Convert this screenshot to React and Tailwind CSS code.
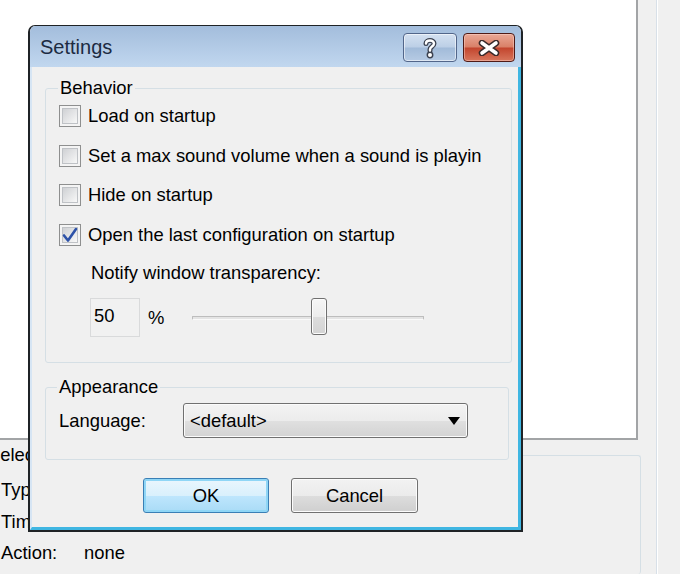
function Check({ label, checked }) {
  return (
    <div className="flex items-center h-[22px]">
      <div className="relative w-[22px] h-[22px] shrink-0 border border-[#8e8f8f] bg-[#f4f4f4] p-[2px]">
        <div className="w-full h-full border border-[#bfc2c6] bg-gradient-to-br from-[#cfd1d4] to-[#f8f8f8]" />
        {checked && (
          <svg className="absolute left-[-1px] top-[-1px]" width="22" height="22" viewBox="0 0 22 22">
            <path d="M5 11.5 L9 16.5 L17 5" fill="none" stroke="#2d52a8" strokeWidth="2.6" strokeLinejoin="round" strokeLinecap="round" />
          </svg>
        )}
      </div>
      <span className="ml-[7px] whitespace-nowrap">{label}</span>
    </div>
  );
}

function Dialog() {
  return (
    <div className="absolute left-[28px] top-[25px] w-[495px] h-[507px] flex flex-col border-2 border-t border-[#1f2326] rounded-t-[7px] overflow-hidden">
      <div className="h-[41px] shrink-0 flex items-start justify-between bg-gradient-to-b from-[#a3bddc] to-[#c1d7ef]">
        <div className="pl-[10px] h-full flex items-center text-[20px] leading-[24px] text-[#1c2b42]">Settings</div>
        <div className="flex gap-[6px] pt-[7px] pr-[6px]">
          <div className="w-[54px] h-[29px] rounded-[4px] border border-[#52668a] bg-[linear-gradient(#d4e1f1_0%,#bccfe6_48%,#a2bbd9_52%,#b6cbe4_100%)] shadow-[inset_0_0_0_1px_rgba(255,255,255,0.55)] flex items-center justify-center">
            <svg width="14" height="22" viewBox="0 0 14 22">
              <g fill="none" strokeLinecap="round" strokeLinejoin="round">
                <path d="M3 6.5 C3 2.5, 11 2.5, 11 6.5 C11 9.5, 7 9.5, 7 12.5 L7 13.5" stroke="#3c4250" strokeWidth="5" />
                <circle cx="7" cy="18" r="1.2" stroke="#3c4250" strokeWidth="4.5" />
                <path d="M3 6.5 C3 2.5, 11 2.5, 11 6.5 C11 9.5, 7 9.5, 7 12.5 L7 13.5" stroke="#ffffff" strokeWidth="2.4" />
                <circle cx="7" cy="18" r="0.9" stroke="#ffffff" strokeWidth="2.2" />
              </g>
            </svg>
          </div>
          <div className="w-[52px] h-[29px] rounded-[4px] border border-[#4f1a16] bg-[linear-gradient(#eaa896_0%,#d98068_48%,#c3452e_52%,#d7765c_100%)] shadow-[inset_0_0_0_1px_rgba(255,220,210,0.45)] flex items-center justify-center">
            <svg width="24" height="16" viewBox="0 0 24 16">
              <g strokeLinecap="round">
                <path d="M5 3 L19 13 M19 3 L5 13" stroke="#3a2a2a" strokeWidth="6.5" />
                <path d="M5 3 L19 13 M19 3 L5 13" stroke="#ffffff" strokeWidth="3.6" />
              </g>
            </svg>
          </div>
        </div>
      </div>
      <div className="flex-1 flex flex-col bg-[#f0f0f0] border-l-2 border-l-[#d6e5f4] border-r-[3px] border-r-[#3fb6e2] border-b-[3px] border-b-[#3fb6e2]">
        <fieldset className="ml-[13px] mt-[10px] w-[467px] border border-[#d5dfe5] rounded-[3px] p-0">
          <legend className="ml-[12px] px-[2px]">Behavior</legend>
          <div className="pl-[13px] pt-[6px] pb-[25px]">
            <div className="flex flex-col gap-[17.5px]">
              <Check label="Load on startup" />
              <Check label="Set a max sound volume when a sound is playin" />
              <Check label="Hide on startup" />
              <Check label="Open the last configuration on startup" checked />
            </div>
            <div className="mt-[16.5px] ml-[32px] h-[22px]">Notify window transparency:</div>
            <div className="mt-[14px] h-[39px] flex items-center">
              <div className="ml-[31px] w-[50px] h-[39px] border border-[#d9dadb] bg-[#f1f1f1] flex items-center pl-[3px] pb-[3px]">50</div>
              <span className="w-[52px] pl-[8px]">%</span>
              <div className="relative w-[232px] h-[39px] flex items-center">
                <div className="w-full h-[4px] bg-[#e4e4e4] border border-[#bdbdbd] border-b-[#fafafa] rounded-[1px]" />
                <div className="absolute left-[119px] top-0 w-[16px] h-[37px] rounded-[3px] border border-[#707070] bg-[linear-gradient(#f6f6f6,#ececec_50%,#dcdcdc_51%,#d4d4d4)] shadow-[inset_0_0_0_1px_#fcfcfc]" />
              </div>
            </div>
          </div>
        </fieldset>
        <fieldset className="ml-[13px] mt-[13px] w-[464px] border border-[#d5dfe5] rounded-[3px] p-0">
          <legend className="ml-[11px] px-[2px]">Appearance</legend>
          <div className="pl-[13px] pt-[5px] pb-[21px] flex items-center">
            <span className="w-[124px]">Language:</span>
            <div className="w-[285px] h-[35px] rounded-[3px] border border-[#707070] bg-[linear-gradient(#f3f3f3,#ececec_50%,#e0e0e0_51%,#d3d3d3)] shadow-[inset_0_0_0_1px_#fbfbfb] flex items-center justify-between pl-[6px] pr-[7px]">
              <span>&lt;default&gt;</span>
              <svg width="12" height="8" viewBox="0 0 12 8">
                <path d="M0 0 H12 L6 8 Z" fill="#000" />
              </svg>
            </div>
          </div>
        </fieldset>
        <div className="mt-[18px] pl-[111px] flex gap-[22px]">
          <div className="w-[126px] h-[35px] rounded-[3px] border border-[#3a7fb5] bg-[linear-gradient(#eaf6fd,#d9f0fc_50%,#bee6fd_51%,#a9dbf6)] shadow-[inset_0_0_0_2px_#8fd6f6] flex items-center justify-center">OK</div>
          <div className="w-[127px] h-[35px] rounded-[3px] border border-[#707070] bg-[linear-gradient(#f2f2f2,#ebebeb_50%,#dddddd_51%,#cfcfcf)] shadow-[inset_0_0_0_1px_#fcfcfc] flex items-center justify-center">Cancel</div>
        </div>
      </div>
    </div>
  );
}

export default function App() {
  return (
    <div className="relative w-[680px] h-[574px] overflow-hidden bg-[#f0f0f0] font-['Liberation_Sans',Arial,sans-serif] text-[18.4px] leading-[22px] text-black">
      <div className="flex h-full">
        <div className="w-[641px] shrink-0 flex flex-col">
          <div className="w-[638px] h-[440px] shrink-0 bg-white border-r-2 border-b-2 border-[#a2a4a6]" />
          <fieldset className="ml-[-30px] w-[671px] mt-[4px] flex-1 border border-b-0 border-[#d5dfe5] rounded-[3px] p-0">
            <legend className="ml-[16px] px-[1px]">Selection</legend>
            <div className="pl-[30px] pt-[13px] flex flex-col gap-[9.5px]">
              <div>Type:</div>
              <div>Time:</div>
              <div className="flex">
                <span className="w-[83px]">Action:</span>
                <span>none</span>
              </div>
            </div>
          </fieldset>
        </div>
        <div className="ml-[15px] w-[2px] h-full border-l border-r border-l-[#d8e0e8] border-r-white" />
      </div>
      <Dialog />
    </div>
  );
}
